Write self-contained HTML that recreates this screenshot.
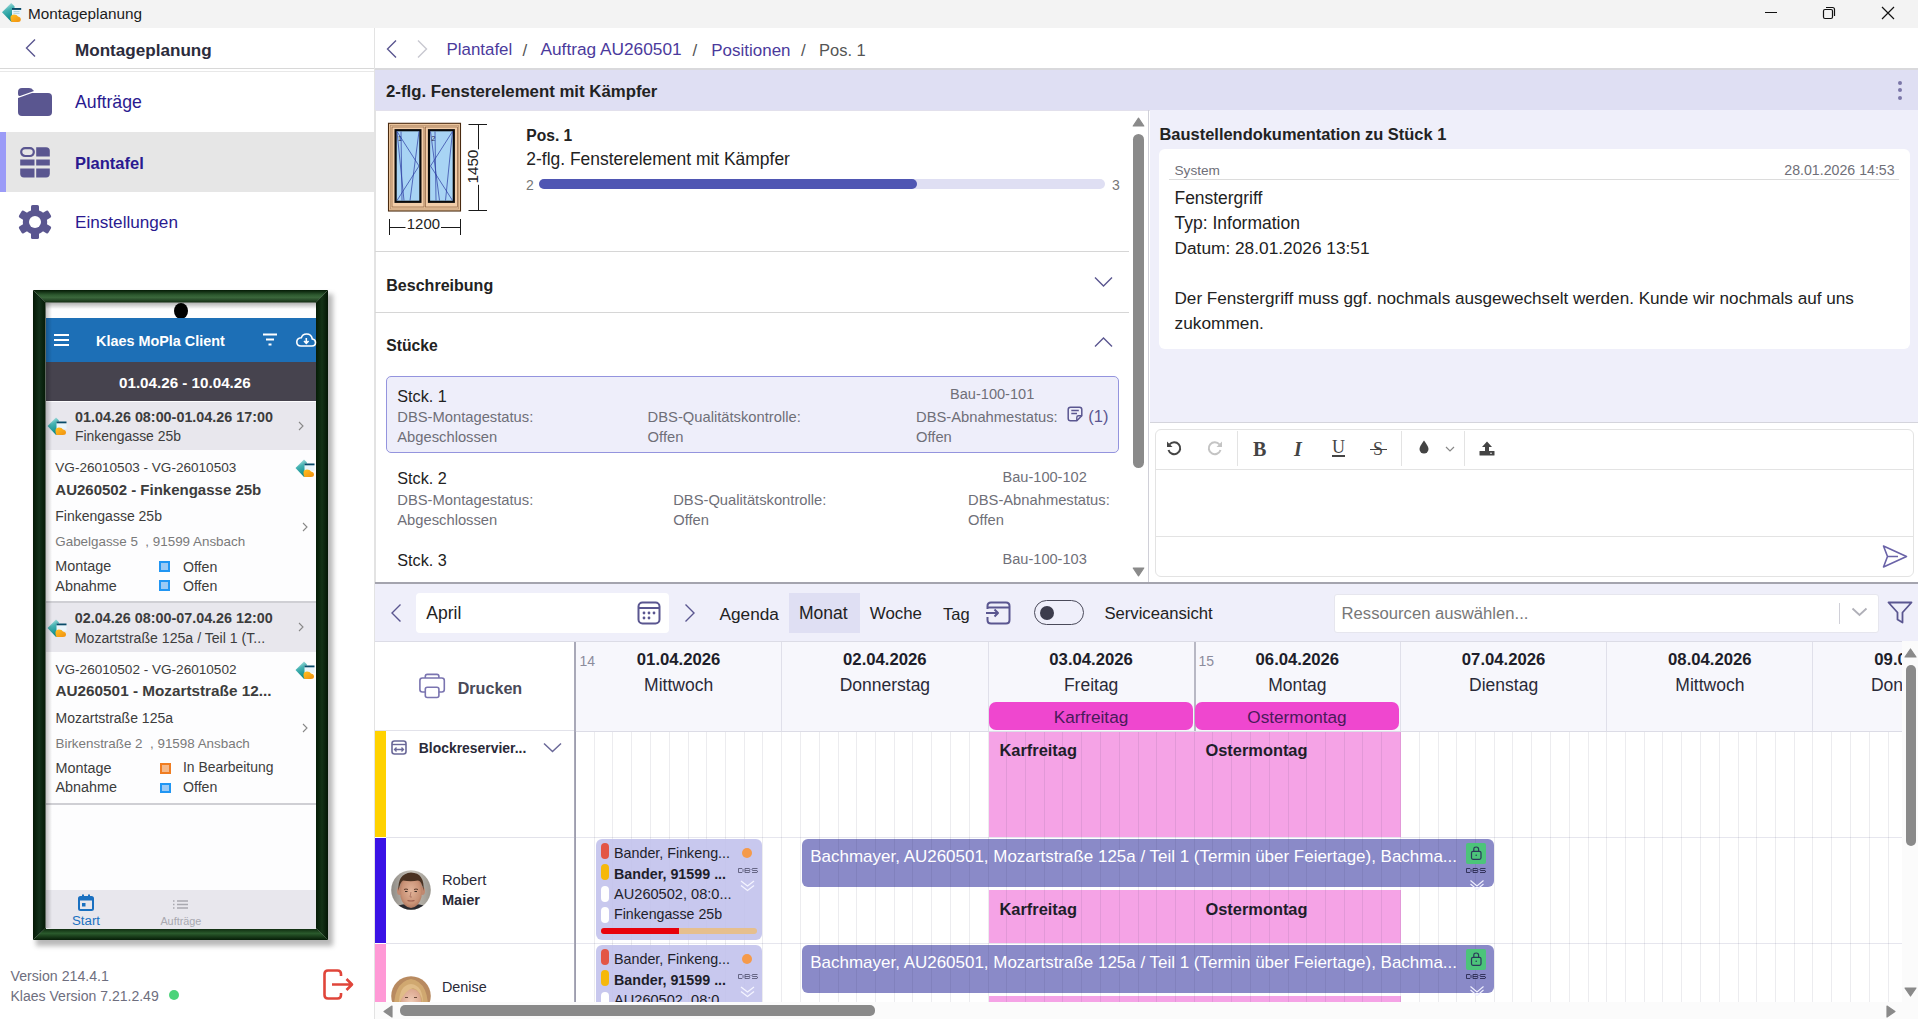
<!DOCTYPE html>
<html><head><meta charset="utf-8"><title>Montageplanung</title>
<style>
html,body{margin:0;padding:0;width:1918px;height:1019px;overflow:hidden;background:#fff;}
body{position:relative;font-family:"Liberation Sans",sans-serif;}
.a{position:absolute;}
.t{position:absolute;white-space:nowrap;font-family:"Liberation Sans",sans-serif;}
svg{overflow:visible}
</style></head><body>
<div class="a" style="left:0px;top:0px;width:1918px;height:28px;background:#f3f3f3;"></div>
<svg class="a" style="left:0px;top:0px;" width="24" height="24" viewBox="0 0 24 24"><defs><linearGradient id="tq" x1="0" y1="0" x2="0.3" y2="1"><stop offset="0" stop-color="#e4f6f6"/><stop offset="0.45" stop-color="#48b4b4"/><stop offset="1" stop-color="#0a8a8a"/></linearGradient>
<linearGradient id="og" x1="0" y1="0" x2="1" y2="1"><stop offset="0" stop-color="#ffc020"/><stop offset="1" stop-color="#f09010"/></linearGradient></defs>
<path d="M2 12.3 L11.2 3 L14.5 6.3 V20 L11.2 21.8Z" fill="url(#tq)"/>
<rect x="12" y="8" width="9.2" height="8.5" fill="#eaf5fb"/><rect x="12" y="8" width="9.2" height="1.9" fill="#0a4a68"/>
<path d="M13.5 11.5 H19.5 M13.5 13.3 H19.5" stroke="#9ac8d8" stroke-width="0.8"/>
<path d="M10.5 17 Q11 14.5 14 14.5 Q17 14.5 18 16.5 Q20.8 17 20.8 19.5 Q20.8 22 18 22 H12 Q10.3 21.5 10.5 17Z" fill="url(#og)"/></svg>
<div class="t " style="left:28px;top:6.05px;font-size:15.3px;line-height:15.3px;font-weight:400;color:#1b1b1b;">Montageplanung</div>
<div class="a" style="left:1765px;top:12px;width:12px;height:1px;background:#111;"></div>
<svg class="a" style="left:1822px;top:6px;" width="14" height="14" viewBox="0 0 14 14"><rect x="1.5" y="3.5" width="9" height="9" rx="1.5" fill="none" stroke="#111" stroke-width="1.2"/><path d="M4 1.5 H10.5 Q12.5 1.5 12.5 3.5 V10" fill="none" stroke="#111" stroke-width="1.2"/></svg>
<svg class="a" style="left:1881px;top:6px;" width="14" height="14" viewBox="0 0 14 14"><path d="M1 1 L13 13 M13 1 L1 13" stroke="#111" stroke-width="1.2"/></svg>
<div class="a" style="left:374px;top:28px;width:1px;height:991px;background:#e3e3e3;"></div>
<svg class="a" style="left:24px;top:38px;" width="14" height="20" viewBox="0 0 14 20"><path d="M11 1.5 L2.5 10 L11 18.5" fill="none" stroke="#5a5690" stroke-width="1.4"/></svg>
<div class="t " style="left:75px;top:41.52px;font-size:17.1px;line-height:17.1px;font-weight:700;color:#2c2c3c;">Montageplanung</div>
<div class="a" style="left:0px;top:68px;width:374px;height:1px;background:#d8d8d8;"></div>
<div class="a" style="left:0px;top:71px;width:374px;height:1px;background:#e8e8e8;"></div>
<svg class="a" style="left:18px;top:88px;" width="34" height="28" viewBox="0 0 34 28"><path d="M0 4 Q0 0 4 0 H11 Q14 0 15 2 L16 3 L2 8 Q0 8.5 0 6Z" fill="#5a5690"/><path d="M0 10 L14 5 H30 Q34 5 34 9 V24 Q34 28 30 28 H4 Q0 28 0 24Z" fill="#5a5690"/></svg>
<div class="t " style="left:75px;top:94.01px;font-size:17.7px;line-height:17.7px;font-weight:400;color:#2a1a90;">Aufträge</div>
<div class="a" style="left:0px;top:132px;width:374px;height:60px;background:#e6e6e6;"></div>
<div class="a" style="left:0px;top:132px;width:6px;height:60px;background:#9b9bf7;"></div>
<svg class="a" style="left:20px;top:146.5px;" width="30" height="31" viewBox="0 0 30 31">
<rect x="1.2" y="1.2" width="12.6" height="7.8" rx="3.9" fill="none" stroke="#5a5690" stroke-width="2.2"/>
<path d="M16.2 0.3 H26 Q29.8 0.3 29.8 4 V9.5 H16.2Z" fill="#5a5690"/>
<rect x="0.2" y="12.5" width="14.3" height="6" fill="#5a5690"/><rect x="16.2" y="12.5" width="13.6" height="6" fill="#5a5690"/>
<path d="M0.2 21.5 H14.5 V30.5 H4 Q0.2 30.5 0.2 26.5Z" fill="#5a5690"/><path d="M16.2 21.5 H29.8 V26.5 Q29.8 30.5 26 30.5 H16.2Z" fill="#5a5690"/>
</svg>
<div class="t " style="left:75px;top:155.03px;font-size:16.5px;line-height:16.5px;font-weight:700;color:#2a1a90;">Plantafel</div>
<svg class="a" style="left:19px;top:205px;" width="32" height="34" viewBox="0 0 32 34"><g transform="translate(16,17)"><circle r="12.2" fill="#5a5690"/><rect x="-4" y="-17" width="8" height="10" rx="1.6" fill="#5a5690" transform="rotate(0)"/><rect x="-4" y="-17" width="8" height="10" rx="1.6" fill="#5a5690" transform="rotate(60)"/><rect x="-4" y="-17" width="8" height="10" rx="1.6" fill="#5a5690" transform="rotate(120)"/><rect x="-4" y="-17" width="8" height="10" rx="1.6" fill="#5a5690" transform="rotate(180)"/><rect x="-4" y="-17" width="8" height="10" rx="1.6" fill="#5a5690" transform="rotate(240)"/><rect x="-4" y="-17" width="8" height="10" rx="1.6" fill="#5a5690" transform="rotate(300)"/><circle r="6" fill="#fff"/></g></svg>
<div class="t " style="left:75px;top:214.48px;font-size:17.15px;line-height:17.15px;font-weight:400;color:#2a1a90;">Einstellungen</div>
<div class="a" style="left:36px;top:294px;width:297px;height:652px;background:rgba(0,0,0,0.28);filter:blur(2.5px);"></div>
<svg class="a" style="left:33px;top:290px;" width="295" height="650" viewBox="0 0 295 650"><defs>
<linearGradient id="gt" x1="0" y1="0" x2="0" y2="1"><stop offset="0" stop-color="#041a05"/><stop offset="0.4" stop-color="#2e5a30"/><stop offset="0.6" stop-color="#3a663b"/><stop offset="1" stop-color="#142e15"/></linearGradient>
<linearGradient id="gl" x1="0" y1="0" x2="1" y2="0"><stop offset="0" stop-color="#041805"/><stop offset="0.5" stop-color="#12301a"/><stop offset="1" stop-color="#051a06"/></linearGradient>
<linearGradient id="gr" x1="0" y1="0" x2="1" y2="0"><stop offset="0" stop-color="#061c07"/><stop offset="0.5" stop-color="#143216"/><stop offset="1" stop-color="#041605"/></linearGradient>
<linearGradient id="gb" x1="0" y1="0" x2="0" y2="1"><stop offset="0" stop-color="#0a240b"/><stop offset="0.45" stop-color="#2a5a2c"/><stop offset="1" stop-color="#061c07"/></linearGradient>
</defs>
<path d="M0 0 H295 L283 12.5 H12.5Z" fill="url(#gt)"/>
<path d="M0 0 L12.5 12.5 V638 L0 650Z" fill="url(#gl)"/>
<path d="M295 0 L283 12.5 V638 L295 650Z" fill="url(#gr)"/>
<path d="M0 650 L12.5 638 H283 L295 650Z" fill="url(#gb)"/></svg>
<div class="a" style="left:45.5px;top:302.5px;width:270.5px;height:625.5px;background:#fdfdfe;"></div>
<div class="a" style="left:173.5px;top:303px;width:14px;height:16px;border-radius:50%;background:#000;"></div>
<div class="a" style="left:46px;top:318px;width:270px;height:44px;background:#1d6fb6;"></div>
<div class="a" style="left:54px;top:334px;width:15px;height:2px;background:#fff;"></div>
<div class="a" style="left:54px;top:339px;width:15px;height:2px;background:#fff;"></div>
<div class="a" style="left:54px;top:344px;width:15px;height:2px;background:#fff;"></div>
<div class="t " style="left:96px;top:333.81px;font-size:14.4px;line-height:14.4px;font-weight:700;color:#fff;">Klaes MoPla Client</div>
<svg class="a" style="left:262px;top:333px;" width="16" height="13" viewBox="0 0 16 13"><path d="M1 1.5 H15 M4 6.5 H12 M6.5 11.5 H9.5" stroke="#fff" stroke-width="1.8"/></svg>
<svg class="a" style="left:296px;top:333px;" width="20" height="14" viewBox="0 0 20 14"><path d="M5 13 H16 Q19.5 13 19.5 9.5 Q19.5 6.3 16.3 6 Q15.5 1 10.5 1 Q6.5 1 5.3 4.8 Q0.8 5.3 0.8 9 Q0.8 13 5 13Z" fill="none" stroke="#fff" stroke-width="1.6"/><path d="M10.3 5 V10 M8 8 L10.3 10.3 L12.6 8" fill="none" stroke="#fff" stroke-width="1.6"/></svg>
<div class="a" style="left:46px;top:362px;width:270px;height:39px;background:#46434e;"></div>
<div class="t " style="left:119px;top:375.13px;font-size:15.2px;line-height:15.2px;font-weight:700;color:#fff;">01.04.26 - 10.04.26</div>
<div class="a" style="left:46px;top:401.5px;width:270px;height:48px;background:#e8e7ed;"></div>
<svg class="a" style="left:47px;top:416px;" width="21" height="20" viewBox="0 0 21 20"><path d="M0.5 10 L9 1.5 L12 4.5 V17 L9 19Z" fill="url(#tq)"/>
<rect x="9.5" y="5.5" width="10" height="7.5" fill="#eaf5fb"/><rect x="9.5" y="5.5" width="10" height="1.8" fill="#0a4a68"/>
<path d="M8.5 14 Q9 11.5 12 11.5 Q15 11.5 16 13.5 Q19 14 19 16.5 Q19 19 16 19 H10 Q8.3 18.5 8.5 14Z" fill="url(#og)"/></svg>
<div class="t " style="left:75px;top:409.54px;font-size:14.36px;line-height:14.36px;font-weight:700;color:#3c3c3c;">01.04.26 08:00-01.04.26 17:00</div>
<div class="t " style="left:75px;top:429.91px;font-size:13.92px;line-height:13.92px;font-weight:400;color:#3c3c3c;">Finkengasse 25b</div>
<svg class="a" style="left:298px;top:421px;" width="6" height="10" viewBox="0 0 6 10"><path d="M1 1 L5 5 L1 9" fill="none" stroke="#888" stroke-width="1.1"/></svg>
<svg class="a" style="left:295px;top:458px;" width="21" height="20" viewBox="0 0 21 20"><path d="M0.5 10 L9 1.5 L12 4.5 V17 L9 19Z" fill="url(#tq)"/>
<rect x="9.5" y="5.5" width="10" height="7.5" fill="#eaf5fb"/><rect x="9.5" y="5.5" width="10" height="1.8" fill="#0a4a68"/>
<path d="M8.5 14 Q9 11.5 12 11.5 Q15 11.5 16 13.5 Q19 14 19 16.5 Q19 19 16 19 H10 Q8.3 18.5 8.5 14Z" fill="url(#og)"/></svg>
<div class="t " style="left:55.3px;top:460.91px;font-size:13.57px;line-height:13.57px;font-weight:400;color:#3c3c3c;">VG-26010503 - VG-26010503</div>
<div class="t " style="left:55.3px;top:482.00px;font-size:15.0px;line-height:15.0px;font-weight:700;color:#3c3c3c;">AU260502 - Finkengasse 25b</div>
<div class="t " style="left:55.3px;top:509.05px;font-size:14.0px;line-height:14.0px;font-weight:400;color:#3c3c3c;">Finkengasse 25b</div>
<div class="t " style="left:55.3px;top:534.65px;font-size:13.4px;line-height:13.4px;font-weight:400;color:#7a7a7a;">Gabelgasse 5&nbsp;&nbsp;, 91599 Ansbach</div>
<svg class="a" style="left:302px;top:522px;" width="6" height="10" viewBox="0 0 6 10"><path d="M1 1 L5 5 L1 9" fill="none" stroke="#888" stroke-width="1.1"/></svg>
<div class="t " style="left:55.3px;top:559.42px;font-size:14.39px;line-height:14.39px;font-weight:400;color:#3c3c3c;">Montage</div>
<div class="t " style="left:55.3px;top:578.82px;font-size:14.39px;line-height:14.39px;font-weight:400;color:#3c3c3c;">Abnahme</div>
<div class="a" style="left:159px;top:561.4px;width:11px;height:10.5px;box-sizing:border-box;border:2.2px solid #2196f3;background:#9ccaf5;"></div>
<div class="a" style="left:159px;top:580.4px;width:11px;height:10.5px;box-sizing:border-box;border:2.2px solid #2196f3;background:#9ccaf5;"></div>
<div class="t " style="left:182.9px;top:559.60px;font-size:14.17px;line-height:14.17px;font-weight:400;color:#3c3c3c;">Offen</div>
<div class="t " style="left:182.9px;top:579.00px;font-size:14.17px;line-height:14.17px;font-weight:400;color:#3c3c3c;">Offen</div>
<div class="a" style="left:46px;top:601px;width:270px;height:1.5px;background:#cfcfd4;"></div>
<div class="a" style="left:46px;top:602.5px;width:270px;height:49px;background:#e8e7ed;"></div>
<svg class="a" style="left:47px;top:618px;" width="21" height="20" viewBox="0 0 21 20"><path d="M0.5 10 L9 1.5 L12 4.5 V17 L9 19Z" fill="url(#tq)"/>
<rect x="9.5" y="5.5" width="10" height="7.5" fill="#eaf5fb"/><rect x="9.5" y="5.5" width="10" height="1.8" fill="#0a4a68"/>
<path d="M8.5 14 Q9 11.5 12 11.5 Q15 11.5 16 13.5 Q19 14 19 16.5 Q19 19 16 19 H10 Q8.3 18.5 8.5 14Z" fill="url(#og)"/></svg>
<div class="t " style="left:74.8px;top:611.24px;font-size:14.36px;line-height:14.36px;font-weight:700;color:#3c3c3c;">02.04.26 08:00-07.04.26 12:00</div>
<div class="t " style="left:74.8px;top:631.24px;font-size:14.12px;line-height:14.12px;font-weight:400;color:#3c3c3c;">Mozartstraße 125a / Teil 1 (T...</div>
<svg class="a" style="left:298px;top:622px;" width="6" height="10" viewBox="0 0 6 10"><path d="M1 1 L5 5 L1 9" fill="none" stroke="#888" stroke-width="1.1"/></svg>
<svg class="a" style="left:295px;top:660px;" width="21" height="20" viewBox="0 0 21 20"><path d="M0.5 10 L9 1.5 L12 4.5 V17 L9 19Z" fill="url(#tq)"/>
<rect x="9.5" y="5.5" width="10" height="7.5" fill="#eaf5fb"/><rect x="9.5" y="5.5" width="10" height="1.8" fill="#0a4a68"/>
<path d="M8.5 14 Q9 11.5 12 11.5 Q15 11.5 16 13.5 Q19 14 19 16.5 Q19 19 16 19 H10 Q8.3 18.5 8.5 14Z" fill="url(#og)"/></svg>
<div class="t " style="left:55.5px;top:662.51px;font-size:13.57px;line-height:13.57px;font-weight:400;color:#3c3c3c;">VG-26010502 - VG-26010502</div>
<div class="t " style="left:55.5px;top:682.85px;font-size:15.3px;line-height:15.3px;font-weight:700;color:#3c3c3c;">AU260501 - Mozartstraße 12...</div>
<div class="t " style="left:55.5px;top:710.65px;font-size:14.0px;line-height:14.0px;font-weight:400;color:#3c3c3c;">Mozartstraße 125a</div>
<div class="t " style="left:55.5px;top:736.65px;font-size:13.4px;line-height:13.4px;font-weight:400;color:#7a7a7a;">Birkenstraße 2&nbsp;&nbsp;, 91598 Ansbach</div>
<svg class="a" style="left:302px;top:723px;" width="6" height="10" viewBox="0 0 6 10"><path d="M1 1 L5 5 L1 9" fill="none" stroke="#888" stroke-width="1.1"/></svg>
<div class="t " style="left:55.5px;top:760.52px;font-size:14.39px;line-height:14.39px;font-weight:400;color:#3c3c3c;">Montage</div>
<div class="t " style="left:55.5px;top:779.82px;font-size:14.39px;line-height:14.39px;font-weight:400;color:#3c3c3c;">Abnahme</div>
<div class="a" style="left:159.5px;top:763.2px;width:11px;height:10.5px;box-sizing:border-box;border:2.2px solid #ef7d22;background:#f5b98a;"></div>
<div class="a" style="left:159.5px;top:782.5px;width:11px;height:10.5px;box-sizing:border-box;border:2.2px solid #2196f3;background:#9ccaf5;"></div>
<div class="t " style="left:183px;top:760.93px;font-size:13.9px;line-height:13.9px;font-weight:400;color:#3c3c3c;">In Bearbeitung</div>
<div class="t " style="left:183px;top:780.00px;font-size:14.17px;line-height:14.17px;font-weight:400;color:#3c3c3c;">Offen</div>
<div class="a" style="left:46px;top:803px;width:270px;height:1.5px;background:#cfcfd4;"></div>
<div class="a" style="left:46px;top:889.5px;width:270px;height:39px;background:#e8e7ed;"></div>
<svg class="a" style="left:78px;top:894px;" width="16" height="17" viewBox="0 0 16 17"><rect x="1" y="3" width="14" height="13" rx="1.5" fill="none" stroke="#1a70c0" stroke-width="2"/><rect x="1" y="3" width="14" height="3.5" fill="#1a70c0"/><rect x="4" y="0.5" width="2" height="4" fill="#1a70c0"/><rect x="10" y="0.5" width="2" height="4" fill="#1a70c0"/><rect x="4" y="9" width="3.5" height="3.5" fill="#1a70c0"/></svg>
<div class="t " style="left:72px;top:913.57px;font-size:13.26px;line-height:13.26px;font-weight:400;color:#1a70c0;">Start</div>
<svg class="a" style="left:173px;top:900px;" width="16" height="10" viewBox="0 0 16 10"><path d="M0 1 H1.5 M0 4.5 H1.5 M0 8 H1.5 M4 1 H15 M4 4.5 H15 M4 8 H15" stroke="#a9a9b0" stroke-width="1.6"/></svg>
<div class="t " style="left:160.4px;top:915.61px;font-size:10.85px;line-height:10.85px;font-weight:400;color:#a9a9b0;">Aufträge</div>
<div class="a" style="left:45.5px;top:302.5px;width:270.5px;height:6px;background:linear-gradient(to bottom, rgba(0,0,0,0.28), rgba(0,0,0,0));"></div>
<div class="a" style="left:45.5px;top:302.5px;width:6px;height:625.5px;background:linear-gradient(to right, rgba(0,0,0,0.22), rgba(0,0,0,0));"></div>
<div class="t " style="left:10.5px;top:968.70px;font-size:14.17px;line-height:14.17px;font-weight:400;color:#6e6e7e;">Version 214.4.1</div>
<div class="t " style="left:10.5px;top:988.61px;font-size:14.04px;line-height:14.04px;font-weight:400;color:#6e6e7e;">Klaes Version 7.21.2.49</div>
<div class="a" style="left:169px;top:990px;width:10px;height:10px;border-radius:50%;background:#4cd37a;"></div>
<svg class="a" style="left:323px;top:969px;" width="32" height="32" viewBox="0 0 32 32"><path d="M18 7 V5 Q18 1.5 14.5 1.5 H5 Q1.5 1.5 1.5 5 V26 Q1.5 29.5 5 29.5 H14.5 Q18 29.5 18 26 V24" fill="none" stroke="#e0453a" stroke-width="2.6"/><path d="M9 15.5 H29 M23.5 10 L29 15.5 L23.5 21" fill="none" stroke="#e0453a" stroke-width="2.6" stroke-linejoin="round"/></svg>
<svg class="a" style="left:385px;top:39px;" width="13" height="20" viewBox="0 0 13 20"><path d="M11 1.5 L2.5 10 L11 18.5" fill="none" stroke="#5a5690" stroke-width="1.4"/></svg>
<svg class="a" style="left:416px;top:39px;" width="13" height="20" viewBox="0 0 13 20"><path d="M2 1.5 L10.5 10 L2 18.5" fill="none" stroke="#c8c8d0" stroke-width="1.4"/></svg>
<div class="t " style="left:446.5px;top:41.69px;font-size:16.9px;line-height:16.9px;font-weight:400;color:#4b3a9c;">Plantafel</div>
<div class="t " style="left:522.5px;top:41.61px;font-size:17px;line-height:17px;font-weight:400;color:#555;">/</div>
<div class="t " style="left:540.5px;top:41.37px;font-size:17.28px;line-height:17.28px;font-weight:400;color:#4b3a9c;">Auftrag AU260501</div>
<div class="t " style="left:692.5px;top:41.61px;font-size:17px;line-height:17px;font-weight:400;color:#555;">/</div>
<div class="t " style="left:711.3px;top:41.62px;font-size:16.98px;line-height:16.98px;font-weight:400;color:#4b3a9c;">Positionen</div>
<div class="t " style="left:801px;top:41.61px;font-size:17px;line-height:17px;font-weight:400;color:#555;">/</div>
<div class="t " style="left:819px;top:42.03px;font-size:16.5px;line-height:16.5px;font-weight:400;color:#555;">Pos. 1</div>
<div class="a" style="left:375px;top:68px;width:1543px;height:2px;background:#d9d9dc;"></div>
<div class="a" style="left:375px;top:70px;width:1543px;height:40px;background:#dfdff3;"></div>
<div class="a" style="left:375px;top:110px;width:1543px;height:1px;background:#e2e0ec;"></div>
<div class="t " style="left:386px;top:83.78px;font-size:16.8px;line-height:16.8px;font-weight:700;color:#222;">2-flg. Fensterelement mit Kämpfer</div>
<div class="a" style="left:1898px;top:81px;width:4px;height:4px;border-radius:50%;background:#7b76a8"></div>
<div class="a" style="left:1898px;top:88px;width:4px;height:4px;border-radius:50%;background:#7b76a8"></div>
<div class="a" style="left:1898px;top:95.5px;width:4px;height:4px;border-radius:50%;background:#7b76a8"></div>
<div class="a" style="left:375px;top:110px;width:1px;height:472px;background:#e3e3e3;"></div>
<svg class="a" style="left:388px;top:122px;" width="100" height="115" viewBox="0 0 100 115">
<rect x="0.5" y="1.3" width="72" height="87.7" fill="#f0c9a0" stroke="#4a2a10" stroke-width="1.1"/>
<rect x="2.5" y="3.3" width="68" height="83.7" fill="none" stroke="#b08a6a" stroke-width="0.7"/>
<rect x="4" y="5" width="32" height="80" fill="#f2cda8" stroke="#8a6040" stroke-width="0.7"/>
<rect x="37.5" y="5" width="32" height="80" fill="#f2cda8" stroke="#8a6040" stroke-width="0.7"/>
<rect x="7.6" y="8.2" width="24.8" height="71.6" fill="#a8d4f4" stroke="#0a0a0a" stroke-width="2.2"/>
<rect x="41" y="8.2" width="24.8" height="71.6" fill="#a8d4f4" stroke="#0a0a0a" stroke-width="2.2"/>
<path d="M9 78.5 L31 44 L9 9.5 M31 9.5 L22 78.5 M9 9.5 L16 78.5 M13 9.5 L14 78.5" fill="none" stroke="#2a3aa0" stroke-width="0.7"/>
<path d="M64.5 78.5 L42.5 44 L64.5 9.5 M42.5 9.5 L51.5 78.5 M64.5 9.5 L57.5 78.5 M47 9.5 L48 78.5" fill="none" stroke="#2a3aa0" stroke-width="0.7"/>
<text x="10" y="19" font-size="7" fill="#2a2a50" font-family="Liberation Sans">1</text>
<text x="43.5" y="19" font-size="7" fill="#2a2a50" font-family="Liberation Sans">2</text>
<path d="M80.5 2.5 H99 M90.5 2.5 V27.3 M90.5 62.8 V88.5 M80.5 88.5 H99" fill="none" stroke="#1a1a1a" stroke-width="1"/>
<path d="M1.5 97 V113 M72.5 97 V113 M1.5 105.5 H17.5 M53 105.5 H72.5" fill="none" stroke="#1a1a1a" stroke-width="1"/>
<text transform="translate(90.3,61.6) rotate(-90)" font-size="15.28" fill="#222" font-family="Liberation Sans">1450</text>
</svg>
<div class="t " style="left:406.8px;top:217.17px;font-size:14.92px;line-height:14.92px;font-weight:400;color:#222;">1200</div>
<div class="t " style="left:526.3px;top:127.99px;font-size:15.6px;line-height:15.6px;font-weight:700;color:#222;">Pos. 1</div>
<div class="t " style="left:526.3px;top:151.22px;font-size:17.46px;line-height:17.46px;font-weight:400;color:#222;">2-flg. Fensterelement mit Kämpfer</div>
<div class="t " style="left:526px;top:178.15px;font-size:14px;line-height:14px;font-weight:400;color:#777;">2</div>
<div class="a" style="left:539px;top:179px;width:566px;height:10px;border-radius:5px;background:#dfdff3"></div>
<div class="a" style="left:539px;top:179px;width:378px;height:10px;border-radius:5px;background:#4f56b3"></div>
<div class="t " style="left:1112px;top:178.15px;font-size:14px;line-height:14px;font-weight:400;color:#777;">3</div>
<div class="a" style="left:375px;top:251px;width:754px;height:1px;background:#d6d6d6;"></div>
<div class="t " style="left:386.3px;top:276.61px;font-size:16.05px;line-height:16.05px;font-weight:700;color:#222;">Beschreibung</div>
<svg class="a" style="left:1094px;top:276px;" width="19" height="12" viewBox="0 0 19 12"><path d="M1 1.5 L9.5 10 L18 1.5" fill="none" stroke="#5a5690" stroke-width="1.4"/></svg>
<div class="a" style="left:375px;top:312px;width:754px;height:1px;background:#d6d6d6;"></div>
<div class="t " style="left:386.3px;top:337.71px;font-size:15.7px;line-height:15.7px;font-weight:700;color:#222;">Stücke</div>
<svg class="a" style="left:1094px;top:336px;" width="19" height="12" viewBox="0 0 19 12"><path d="M1 10.5 L9.5 2 L18 10.5" fill="none" stroke="#5a5690" stroke-width="1.4"/></svg>
<div class="a" style="left:386px;top:376px;width:733px;height:76.5px;box-sizing:border-box;border:1px solid #9494de;border-radius:5px;background:#eeeefa"></div>
<div class="t " style="left:397.3px;top:388.28px;font-size:16.2px;line-height:16.2px;font-weight:400;color:#222;">Stck. 1</div>
<div class="t " style="left:950px;top:386.86px;font-size:14.58px;line-height:14.58px;font-weight:400;color:#6f6f78;">Bau-100-101</div>
<div class="t " style="left:397.3px;top:410.32px;font-size:14.74px;line-height:14.74px;font-weight:400;color:#6f6f78;">DBS-Montagestatus:</div>
<div class="t " style="left:397.3px;top:430.32px;font-size:14.74px;line-height:14.74px;font-weight:400;color:#6f6f78;">Abgeschlossen</div>
<div class="t " style="left:647.6px;top:410.32px;font-size:14.74px;line-height:14.74px;font-weight:400;color:#6f6f78;">DBS-Qualitätskontrolle:</div>
<div class="t " style="left:647.6px;top:430.32px;font-size:14.74px;line-height:14.74px;font-weight:400;color:#6f6f78;">Offen</div>
<div class="t " style="left:916px;top:410.32px;font-size:14.74px;line-height:14.74px;font-weight:400;color:#6f6f78;">DBS-Abnahmestatus:</div>
<div class="t " style="left:916px;top:430.32px;font-size:14.74px;line-height:14.74px;font-weight:400;color:#6f6f78;">Offen</div>
<svg class="a" style="left:1067px;top:406px;" width="16" height="16" viewBox="0 0 16 16"><path d="M9.8 14.8 H3.5 Q1.2 14.8 1.2 12.5 V3.5 Q1.2 1.2 3.5 1.2 H12.5 Q14.8 1.2 14.8 3.5 V9.8Z" fill="none" stroke="#5a5690" stroke-width="1.5" stroke-linejoin="round"/><path d="M9.8 14.8 V11.5 Q9.8 9.8 11.5 9.8 H14.8" fill="none" stroke="#5a5690" stroke-width="1.4"/><path d="M4.3 4.5 H11.8 M4.3 7.5 H10" stroke="#5a5690" stroke-width="1.4"/></svg>
<div class="t " style="left:1088.3px;top:407.83px;font-size:16.5px;line-height:16.5px;font-weight:400;color:#5a5690;">(1)</div>
<div class="t " style="left:397.3px;top:469.68px;font-size:16.2px;line-height:16.2px;font-weight:400;color:#222;">Stck. 2</div>
<div class="t " style="left:1002.5px;top:469.96px;font-size:14.58px;line-height:14.58px;font-weight:400;color:#6f6f78;">Bau-100-102</div>
<div class="t " style="left:397.3px;top:492.92px;font-size:14.74px;line-height:14.74px;font-weight:400;color:#6f6f78;">DBS-Montagestatus:</div>
<div class="t " style="left:397.3px;top:513.12px;font-size:14.74px;line-height:14.74px;font-weight:400;color:#6f6f78;">Abgeschlossen</div>
<div class="t " style="left:673.2px;top:492.92px;font-size:14.74px;line-height:14.74px;font-weight:400;color:#6f6f78;">DBS-Qualitätskontrolle:</div>
<div class="t " style="left:673.2px;top:513.12px;font-size:14.74px;line-height:14.74px;font-weight:400;color:#6f6f78;">Offen</div>
<div class="t " style="left:968.1px;top:492.92px;font-size:14.74px;line-height:14.74px;font-weight:400;color:#6f6f78;">DBS-Abnahmestatus:</div>
<div class="t " style="left:968.1px;top:513.12px;font-size:14.74px;line-height:14.74px;font-weight:400;color:#6f6f78;">Offen</div>
<div class="t " style="left:397.3px;top:552.28px;font-size:16.2px;line-height:16.2px;font-weight:400;color:#222;">Stck. 3</div>
<div class="t " style="left:1002.5px;top:551.96px;font-size:14.58px;line-height:14.58px;font-weight:400;color:#6f6f78;">Bau-100-103</div>
<svg class="a" style="left:1132px;top:117px;" width="13" height="10" viewBox="0 0 13 10"><path d="M1.2 9 L6.5 1.2 L11.8 9Z" fill="#8a8a8a" stroke="#8a8a8a" stroke-width="1.2" stroke-linejoin="round"/></svg>
<div class="a" style="left:1133px;top:134px;width:11px;height:334px;border-radius:5.5px;background:#8a8a8a"></div>
<svg class="a" style="left:1132px;top:567px;" width="13" height="10" viewBox="0 0 13 10"><path d="M1.2 1 L6.5 8.8 L11.8 1Z" fill="#8a8a8a" stroke="#8a8a8a" stroke-width="1.2" stroke-linejoin="round"/></svg>
<div class="a" style="left:1148px;top:110px;width:1px;height:472px;background:#d0d0d8;"></div>
<div class="a" style="left:1149.5px;top:110px;width:768.5px;height:312px;background:#efeffa;"></div>
<div class="t " style="left:1159.5px;top:126.07px;font-size:16.45px;line-height:16.45px;font-weight:700;color:#222;">Baustellendokumentation zu Stück 1</div>
<div class="a" style="left:1159px;top:149px;width:751px;height:200px;border-radius:6px;background:#fff"></div>
<div class="t " style="left:1174.5px;top:163.94px;font-size:13.65px;line-height:13.65px;font-weight:400;color:#6f6f78;">System</div>
<div class="t " style="right:23.40000000000009px;top:163.49px;font-size:14.18px;line-height:14.18px;font-weight:400;color:#6f6f78;">28.01.2026 14:53</div>
<div class="a" style="left:1169px;top:179px;width:730px;height:1px;background:#dcdcdc;"></div>
<div class="t " style="left:1174.5px;top:190.22px;font-size:17.46px;line-height:17.46px;font-weight:400;color:#222;">Fenstergriff</div>
<div class="t " style="left:1174.5px;top:215.18px;font-size:17.5px;line-height:17.5px;font-weight:400;color:#222;">Typ: Information</div>
<div class="t " style="left:1174.5px;top:240.35px;font-size:17.3px;line-height:17.3px;font-weight:400;color:#222;">Datum: 28.01.2026 13:51</div>
<div class="t " style="left:1174.5px;top:290.49px;font-size:17.14px;line-height:17.14px;font-weight:400;color:#222;">Der Fenstergriff muss ggf. nochmals ausgewechselt werden. Kunde wir nochmals auf uns</div>
<div class="t " style="left:1174.5px;top:314.85px;font-size:17.3px;line-height:17.3px;font-weight:400;color:#222;">zukommen.</div>
<div class="a" style="left:1149.5px;top:422px;width:768.5px;height:1px;background:#d4d4dc;"></div>
<div class="a" style="left:1149.5px;top:423px;width:768.5px;height:159px;background:#fff;"></div>
<div class="a" style="left:1154.5px;top:428.5px;width:759.5px;height:148.5px;box-sizing:border-box;border:1px solid #e3e3e3;border-radius:6px;"></div>
<div class="a" style="left:1155px;top:469px;width:759px;height:1px;background:#e3e3e3;"></div>
<div class="a" style="left:1155px;top:535.5px;width:759px;height:1px;background:#e3e3e3;"></div>
<div class="a" style="left:1236.5px;top:431px;width:1px;height:35px;background:#e3e3e3;"></div>
<div class="a" style="left:1400.5px;top:431px;width:1px;height:35px;background:#e3e3e3;"></div>
<div class="a" style="left:1463.5px;top:431px;width:1px;height:35px;background:#e3e3e3;"></div>
<svg class="a" style="left:1166px;top:440px;" width="16" height="16" viewBox="0 0 16 16"><path d="M3.5 4.5 A6 6 0 1 1 2.5 10" fill="none" stroke="#444" stroke-width="2"/><path d="M1 1.5 V7 H6.5Z" fill="#444"/></svg>
<svg class="a" style="left:1207px;top:440px;" width="16" height="16" viewBox="0 0 16 16"><path d="M12.5 4.5 A6 6 0 1 0 13.5 10" fill="none" stroke="#c4c4c4" stroke-width="2"/><path d="M15 1.5 V7 H9.5Z" fill="#c4c4c4"/></svg>
<div class="t " style="left:1253px;top:438.57px;font-size:20px;line-height:20px;font-weight:700;color:#444;font-family:Liberation Serif,serif;">B</div>
<div class="t " style="left:1294px;top:438.57px;font-size:20px;line-height:20px;font-weight:700;color:#444;font-family:Liberation Serif,serif;font-style:italic;">I</div>
<div class="t " style="left:1332px;top:438.26px;font-size:18px;line-height:18px;font-weight:400;color:#444;font-family:Liberation Serif,serif;">U</div>
<div class="a" style="left:1332px;top:455px;width:13px;height:1.6px;background:#444;"></div>
<div class="t " style="left:1373px;top:440.26px;font-size:18px;line-height:18px;font-weight:400;color:#444;font-family:Liberation Serif,serif;">S</div>
<div class="a" style="left:1369.5px;top:448.5px;width:17px;height:1.3px;background:#444;"></div>
<svg class="a" style="left:1418.5px;top:440px;" width="10" height="14" viewBox="0 0 10 14"><path d="M5 0.5 Q9.5 6.5 9.5 9 A4.5 4.5 0 0 1 0.5 9 Q0.5 6.5 5 0.5Z" fill="#444"/></svg>
<svg class="a" style="left:1444.5px;top:446px;" width="10" height="6" viewBox="0 0 10 6"><path d="M1 1 L5 5 L9 1" fill="none" stroke="#888" stroke-width="1.2"/></svg>
<svg class="a" style="left:1478.5px;top:441px;" width="16" height="15" viewBox="0 0 16 15"><path d="M8 0.5 L13 6 H10 V11 H6 V6 H3Z" fill="#444"/><rect x="0.5" y="10" width="15" height="4.5" rx="0.5" fill="#444"/><circle cx="12" cy="12.3" r="0.8" fill="#fff"/></svg>
<svg class="a" style="left:1881.5px;top:544px;" width="26" height="26" viewBox="0 0 26 26"><path d="M1.5 2 L24.5 12.5 L1.5 23 L5.5 12.5Z M5.5 12.5 H16" fill="none" stroke="#6a63a8" stroke-width="1.6" stroke-linejoin="round"/></svg>
<div class="a" style="left:375px;top:582px;width:1543px;height:2px;background:#a4a4ae;"></div>
<div class="a" style="left:375px;top:584px;width:1543px;height:57px;background:#efeffa;"></div>
<svg class="a" style="left:390px;top:603px;" width="12" height="20" viewBox="0 0 12 20"><path d="M10.5 1.5 L2 10 L10.5 18.5" fill="none" stroke="#5a5690" stroke-width="1.4"/></svg>
<div class="a" style="left:416px;top:593px;width:253px;height:39.5px;border-radius:4px;background:#fff"></div>
<div class="t " style="left:426.3px;top:604.88px;font-size:17.5px;line-height:17.5px;font-weight:400;color:#222;">April</div>
<svg class="a" style="left:637px;top:601px;" width="24" height="24" viewBox="0 0 24 24"><rect x="1.5" y="1.5" width="21" height="21" rx="4" fill="none" stroke="#5a5690" stroke-width="2"/><path d="M1.5 7 H22.5" stroke="#5a5690" stroke-width="2"/><circle cx="7" cy="12" r="1.4" fill="#5a5690"/><circle cx="12" cy="12" r="1.4" fill="#5a5690"/><circle cx="17" cy="12" r="1.4" fill="#5a5690"/><circle cx="7" cy="17" r="1.4" fill="#5a5690"/><circle cx="12" cy="17" r="1.4" fill="#5a5690"/></svg>
<svg class="a" style="left:684px;top:603px;" width="12" height="20" viewBox="0 0 12 20"><path d="M1.5 1.5 L10 10 L1.5 18.5" fill="none" stroke="#5a5690" stroke-width="1.4"/></svg>
<div class="t " style="left:719.5px;top:605.71px;font-size:17.23px;line-height:17.23px;font-weight:400;color:#222;">Agenda</div>
<div class="a" style="left:789px;top:593px;width:71px;height:40px;background:#dfdff3;"></div>
<div class="t " style="left:799px;top:605.48px;font-size:17.5px;line-height:17.5px;font-weight:400;color:#222;">Monat</div>
<div class="t " style="left:869.8px;top:606.02px;font-size:16.87px;line-height:16.87px;font-weight:400;color:#222;">Woche</div>
<div class="t " style="left:943px;top:606.33px;font-size:16.5px;line-height:16.5px;font-weight:400;color:#222;">Tag</div>
<svg class="a" style="left:986px;top:601px;" width="25" height="24" viewBox="0 0 25 24"><path d="M1.5 8 V5 Q1.5 1.5 5 1.5 H20 Q23.5 1.5 23.5 5 V19 Q23.5 22.5 20 22.5 H5 Q1.5 22.5 1.5 19 V16" fill="none" stroke="#5a5690" stroke-width="2"/><path d="M1.5 6.5 H23.5" stroke="#5a5690" stroke-width="2"/><path d="M0 12 H12 M8.5 8.5 L12 12 L8.5 15.5" fill="none" stroke="#5a5690" stroke-width="2" stroke-linejoin="round"/></svg>
<div class="a" style="left:1034px;top:600px;width:50px;height:25px;box-sizing:border-box;border:1.5px solid #4a4a5a;border-radius:12.5px;"></div>
<div class="a" style="left:1039.5px;top:605.5px;width:14px;height:14px;border-radius:50%;background:#3c3c4c"></div>
<div class="t " style="left:1104.4px;top:606.19px;font-size:16.67px;line-height:16.67px;font-weight:400;color:#222;">Serviceansicht</div>
<div class="a" style="left:1334px;top:593.5px;width:545px;height:39.5px;box-sizing:border-box;border:1px solid #e6e6ee;border-radius:3px;background:#fff"></div>
<div class="t " style="left:1341.6px;top:606.20px;font-size:16.65px;line-height:16.65px;font-weight:400;color:#777;">Ressourcen auswählen...</div>
<div class="a" style="left:1838.5px;top:603px;width:1px;height:21px;background:#d0d0d8;"></div>
<svg class="a" style="left:1851px;top:607px;" width="17" height="10" viewBox="0 0 17 10"><path d="M1.5 1.5 L8.5 8 L15.5 1.5" fill="none" stroke="#b0b0b8" stroke-width="1.8"/></svg>
<svg class="a" style="left:1887px;top:601px;" width="26" height="23" viewBox="0 0 26 23"><path d="M1.5 1.5 H24.5 L15.5 11.5 V21.5 L10.5 18.5 V11.5Z" fill="none" stroke="#5a5690" stroke-width="1.8" stroke-linejoin="round"/></svg>
<div class="a" style="left:375px;top:641px;width:1543px;height:1px;background:#dcdce6;"></div>
<div class="a" style="left:375px;top:642px;width:199.5px;height:360px;background:#fff;"></div>
<svg class="a" style="left:419px;top:673px;" width="26" height="26" viewBox="0 0 26 26"><path d="M6.3 5 V3.5 Q6.3 1.4 8.3 1.4 H17.9 Q19.9 1.4 19.9 3.5 V5" fill="none" stroke="#7a74b0" stroke-width="1.6"/><path d="M6.3 19 H3.4 Q0.9 19 0.9 16.5 V7.5 Q0.9 5 3.4 5 H22.8 Q25.3 5 25.3 7.5 V16.5 Q25.3 19 22.8 19 H19.9" fill="none" stroke="#7a74b0" stroke-width="1.6"/><rect x="6.3" y="14.2" width="13.6" height="10.3" rx="2" fill="#fff" stroke="#7a74b0" stroke-width="1.6"/></svg>
<div class="t " style="left:457.7px;top:680.33px;font-size:16.14px;line-height:16.14px;font-weight:700;color:#4a4a58;">Drucken</div>
<div class="a" style="left:576px;top:642px;width:1326px;height:89px;background:#f7f7fc;"></div>
<div class="a" style="left:781px;top:642px;width:1px;height:89px;background:#e0e0ea;"></div>
<div class="a" style="left:988px;top:642px;width:1px;height:89px;background:#e0e0ea;"></div>
<div class="a" style="left:1194px;top:642px;width:1.5px;height:89px;background:#b8b8c4;"></div>
<div class="a" style="left:1400px;top:642px;width:1px;height:89px;background:#e0e0ea;"></div>
<div class="a" style="left:1606px;top:642px;width:1px;height:89px;background:#e0e0ea;"></div>
<div class="a" style="left:1812px;top:642px;width:1px;height:89px;background:#e0e0ea;"></div>
<div class="a" style="left:574px;top:642px;width:1.8px;height:360px;background:#a9a9b8;"></div>
<div class="t " style="left:579.5px;top:654.15px;font-size:14px;line-height:14px;font-weight:400;color:#8c8c9c;">14</div>
<div class="t " style="left:1198.5px;top:654.15px;font-size:14px;line-height:14px;font-weight:400;color:#8c8c9c;">15</div>
<div class="t " style="left:378.625px;width:600px;text-align:center;top:652.34px;font-size:16.72px;line-height:16.72px;font-weight:700;color:#1e1e2a;">01.04.2026</div>
<div class="t " style="left:378.625px;width:600px;text-align:center;top:676.98px;font-size:17.5px;line-height:17.5px;font-weight:400;color:#2a2a38;">Mittwoch</div>
<div class="t " style="left:584.875px;width:600px;text-align:center;top:652.34px;font-size:16.72px;line-height:16.72px;font-weight:700;color:#1e1e2a;">02.04.2026</div>
<div class="t " style="left:584.875px;width:600px;text-align:center;top:676.98px;font-size:17.5px;line-height:17.5px;font-weight:400;color:#2a2a38;">Donnerstag</div>
<div class="t " style="left:791.125px;width:600px;text-align:center;top:652.34px;font-size:16.72px;line-height:16.72px;font-weight:700;color:#1e1e2a;">03.04.2026</div>
<div class="t " style="left:791.125px;width:600px;text-align:center;top:676.98px;font-size:17.5px;line-height:17.5px;font-weight:400;color:#2a2a38;">Freitag</div>
<div class="t " style="left:997.375px;width:600px;text-align:center;top:652.34px;font-size:16.72px;line-height:16.72px;font-weight:700;color:#1e1e2a;">06.04.2026</div>
<div class="t " style="left:997.375px;width:600px;text-align:center;top:676.98px;font-size:17.5px;line-height:17.5px;font-weight:400;color:#2a2a38;">Montag</div>
<div class="t " style="left:1203.625px;width:600px;text-align:center;top:652.34px;font-size:16.72px;line-height:16.72px;font-weight:700;color:#1e1e2a;">07.04.2026</div>
<div class="t " style="left:1203.625px;width:600px;text-align:center;top:676.98px;font-size:17.5px;line-height:17.5px;font-weight:400;color:#2a2a38;">Dienstag</div>
<div class="t " style="left:1409.875px;width:600px;text-align:center;top:652.34px;font-size:16.72px;line-height:16.72px;font-weight:700;color:#1e1e2a;">08.04.2026</div>
<div class="t " style="left:1409.875px;width:600px;text-align:center;top:676.98px;font-size:17.5px;line-height:17.5px;font-weight:400;color:#2a2a38;">Mittwoch</div>
<div class="t " style="left:1616.125px;width:600px;text-align:center;top:652.34px;font-size:16.72px;line-height:16.72px;font-weight:700;color:#1e1e2a;">09.04.2026</div>
<div class="t " style="left:1616.125px;width:600px;text-align:center;top:676.98px;font-size:17.5px;line-height:17.5px;font-weight:400;color:#2a2a38;">Donnerstag</div>
<div class="a" style="left:989px;top:702px;width:204px;height:28px;border-radius:7px;background:#ef47cf"></div>
<div class="a" style="left:1195px;top:702px;width:204px;height:28px;border-radius:7px;background:#ef47cf"></div>
<div class="t " style="left:791px;width:600px;text-align:center;top:708.74px;font-size:17.2px;line-height:17.2px;font-weight:400;color:#4a1a5a;">Karfreitag</div>
<div class="t " style="left:997px;width:600px;text-align:center;top:708.74px;font-size:17.2px;line-height:17.2px;font-weight:400;color:#4a1a5a;">Ostermontag</div>
<div class="a" style="left:576px;top:730.5px;width:1326px;height:1px;background:#dcdce6;"></div>
<div class="a" style="left:375px;top:730px;width:199px;height:1px;background:#e2e2ea;"></div>
<div class="a" style="left:576px;top:731.5px;width:1326px;height:270.5px;background:#fff;"></div>
<div class="a" style="left:375px;top:731px;width:11px;height:106px;background:#ffd200;"></div>
<div class="a" style="left:375px;top:838px;width:11px;height:105px;background:#3a12e6;"></div>
<div class="a" style="left:375px;top:944px;width:11px;height:58px;background:#ff99d6;"></div>
<div class="a" style="left:386px;top:836.5px;width:188px;height:1px;background:#e2e2ea;"></div>
<div class="a" style="left:576px;top:836.5px;width:1326px;height:1px;background:#e6e6ee;"></div>
<div class="a" style="left:386px;top:943px;width:188px;height:1px;background:#e2e2ea;"></div>
<div class="a" style="left:576px;top:943px;width:1326px;height:1px;background:#e6e6ee;"></div>
<div class="a" style="left:989px;top:731.5px;width:412px;height:105px;background:#f5a3e6;"></div>
<div class="a" style="left:989px;top:890px;width:412px;height:52.5px;background:#f5a3e6;"></div>
<div class="a" style="left:989px;top:996px;width:412px;height:6px;background:#f5a3e6;"></div>
<div class="a" style="left:802px;top:839px;width:692px;height:48px;border-radius:6px;background:#8a8ac8"></div>
<div class="a" style="left:802px;top:945px;width:692px;height:47.5px;border-radius:6px;background:#8a8ac8"></div>
<div class="a" style="left:575px;top:731.5px;width:1px;height:270.5px;background:rgba(40,40,80,0.09);"></div>
<div class="a" style="left:594px;top:731.5px;width:1px;height:270.5px;background:rgba(40,40,80,0.09);"></div>
<div class="a" style="left:612px;top:731.5px;width:1px;height:270.5px;background:rgba(40,40,80,0.09);"></div>
<div class="a" style="left:631px;top:731.5px;width:1px;height:270.5px;background:rgba(40,40,80,0.09);"></div>
<div class="a" style="left:650px;top:731.5px;width:1px;height:270.5px;background:rgba(40,40,80,0.09);"></div>
<div class="a" style="left:669px;top:731.5px;width:1px;height:270.5px;background:rgba(40,40,80,0.09);"></div>
<div class="a" style="left:688px;top:731.5px;width:1px;height:270.5px;background:rgba(40,40,80,0.09);"></div>
<div class="a" style="left:706px;top:731.5px;width:1px;height:270.5px;background:rgba(40,40,80,0.09);"></div>
<div class="a" style="left:725px;top:731.5px;width:1px;height:270.5px;background:rgba(40,40,80,0.09);"></div>
<div class="a" style="left:744px;top:731.5px;width:1px;height:270.5px;background:rgba(40,40,80,0.09);"></div>
<div class="a" style="left:762px;top:731.5px;width:1px;height:270.5px;background:rgba(40,40,80,0.09);"></div>
<div class="a" style="left:781px;top:731.5px;width:1px;height:270.5px;background:rgba(40,40,80,0.09);"></div>
<div class="a" style="left:800px;top:731.5px;width:1px;height:270.5px;background:rgba(40,40,80,0.09);"></div>
<div class="a" style="left:819px;top:731.5px;width:1px;height:270.5px;background:rgba(40,40,80,0.09);"></div>
<div class="a" style="left:838px;top:731.5px;width:1px;height:270.5px;background:rgba(40,40,80,0.09);"></div>
<div class="a" style="left:856px;top:731.5px;width:1px;height:270.5px;background:rgba(40,40,80,0.09);"></div>
<div class="a" style="left:875px;top:731.5px;width:1px;height:270.5px;background:rgba(40,40,80,0.09);"></div>
<div class="a" style="left:894px;top:731.5px;width:1px;height:270.5px;background:rgba(40,40,80,0.09);"></div>
<div class="a" style="left:912px;top:731.5px;width:1px;height:270.5px;background:rgba(40,40,80,0.09);"></div>
<div class="a" style="left:931px;top:731.5px;width:1px;height:270.5px;background:rgba(40,40,80,0.09);"></div>
<div class="a" style="left:950px;top:731.5px;width:1px;height:270.5px;background:rgba(40,40,80,0.09);"></div>
<div class="a" style="left:969px;top:731.5px;width:1px;height:270.5px;background:rgba(40,40,80,0.09);"></div>
<div class="a" style="left:988px;top:731.5px;width:1px;height:270.5px;background:rgba(40,40,80,0.09);"></div>
<div class="a" style="left:1006px;top:731.5px;width:1px;height:270.5px;background:rgba(40,40,80,0.09);"></div>
<div class="a" style="left:1025px;top:731.5px;width:1px;height:270.5px;background:rgba(40,40,80,0.09);"></div>
<div class="a" style="left:1044px;top:731.5px;width:1px;height:270.5px;background:rgba(40,40,80,0.09);"></div>
<div class="a" style="left:1062px;top:731.5px;width:1px;height:270.5px;background:rgba(40,40,80,0.09);"></div>
<div class="a" style="left:1081px;top:731.5px;width:1px;height:270.5px;background:rgba(40,40,80,0.09);"></div>
<div class="a" style="left:1100px;top:731.5px;width:1px;height:270.5px;background:rgba(40,40,80,0.09);"></div>
<div class="a" style="left:1119px;top:731.5px;width:1px;height:270.5px;background:rgba(40,40,80,0.09);"></div>
<div class="a" style="left:1138px;top:731.5px;width:1px;height:270.5px;background:rgba(40,40,80,0.09);"></div>
<div class="a" style="left:1156px;top:731.5px;width:1px;height:270.5px;background:rgba(40,40,80,0.09);"></div>
<div class="a" style="left:1175px;top:731.5px;width:1px;height:270.5px;background:rgba(40,40,80,0.09);"></div>
<div class="a" style="left:1194px;top:731.5px;width:1px;height:270.5px;background:rgba(40,40,80,0.09);"></div>
<div class="a" style="left:1212px;top:731.5px;width:1px;height:270.5px;background:rgba(40,40,80,0.09);"></div>
<div class="a" style="left:1231px;top:731.5px;width:1px;height:270.5px;background:rgba(40,40,80,0.09);"></div>
<div class="a" style="left:1250px;top:731.5px;width:1px;height:270.5px;background:rgba(40,40,80,0.09);"></div>
<div class="a" style="left:1269px;top:731.5px;width:1px;height:270.5px;background:rgba(40,40,80,0.09);"></div>
<div class="a" style="left:1288px;top:731.5px;width:1px;height:270.5px;background:rgba(40,40,80,0.09);"></div>
<div class="a" style="left:1306px;top:731.5px;width:1px;height:270.5px;background:rgba(40,40,80,0.09);"></div>
<div class="a" style="left:1325px;top:731.5px;width:1px;height:270.5px;background:rgba(40,40,80,0.09);"></div>
<div class="a" style="left:1344px;top:731.5px;width:1px;height:270.5px;background:rgba(40,40,80,0.09);"></div>
<div class="a" style="left:1362px;top:731.5px;width:1px;height:270.5px;background:rgba(40,40,80,0.09);"></div>
<div class="a" style="left:1381px;top:731.5px;width:1px;height:270.5px;background:rgba(40,40,80,0.09);"></div>
<div class="a" style="left:1400px;top:731.5px;width:1px;height:270.5px;background:rgba(40,40,80,0.09);"></div>
<div class="a" style="left:1419px;top:731.5px;width:1px;height:270.5px;background:rgba(40,40,80,0.09);"></div>
<div class="a" style="left:1438px;top:731.5px;width:1px;height:270.5px;background:rgba(40,40,80,0.09);"></div>
<div class="a" style="left:1456px;top:731.5px;width:1px;height:270.5px;background:rgba(40,40,80,0.09);"></div>
<div class="a" style="left:1475px;top:731.5px;width:1px;height:270.5px;background:rgba(40,40,80,0.09);"></div>
<div class="a" style="left:1494px;top:731.5px;width:1px;height:270.5px;background:rgba(40,40,80,0.09);"></div>
<div class="a" style="left:1512px;top:731.5px;width:1px;height:270.5px;background:rgba(40,40,80,0.09);"></div>
<div class="a" style="left:1531px;top:731.5px;width:1px;height:270.5px;background:rgba(40,40,80,0.09);"></div>
<div class="a" style="left:1550px;top:731.5px;width:1px;height:270.5px;background:rgba(40,40,80,0.09);"></div>
<div class="a" style="left:1569px;top:731.5px;width:1px;height:270.5px;background:rgba(40,40,80,0.09);"></div>
<div class="a" style="left:1588px;top:731.5px;width:1px;height:270.5px;background:rgba(40,40,80,0.09);"></div>
<div class="a" style="left:1606px;top:731.5px;width:1px;height:270.5px;background:rgba(40,40,80,0.09);"></div>
<div class="a" style="left:1625px;top:731.5px;width:1px;height:270.5px;background:rgba(40,40,80,0.09);"></div>
<div class="a" style="left:1644px;top:731.5px;width:1px;height:270.5px;background:rgba(40,40,80,0.09);"></div>
<div class="a" style="left:1662px;top:731.5px;width:1px;height:270.5px;background:rgba(40,40,80,0.09);"></div>
<div class="a" style="left:1681px;top:731.5px;width:1px;height:270.5px;background:rgba(40,40,80,0.09);"></div>
<div class="a" style="left:1700px;top:731.5px;width:1px;height:270.5px;background:rgba(40,40,80,0.09);"></div>
<div class="a" style="left:1719px;top:731.5px;width:1px;height:270.5px;background:rgba(40,40,80,0.09);"></div>
<div class="a" style="left:1738px;top:731.5px;width:1px;height:270.5px;background:rgba(40,40,80,0.09);"></div>
<div class="a" style="left:1756px;top:731.5px;width:1px;height:270.5px;background:rgba(40,40,80,0.09);"></div>
<div class="a" style="left:1775px;top:731.5px;width:1px;height:270.5px;background:rgba(40,40,80,0.09);"></div>
<div class="a" style="left:1794px;top:731.5px;width:1px;height:270.5px;background:rgba(40,40,80,0.09);"></div>
<div class="a" style="left:1812px;top:731.5px;width:1px;height:270.5px;background:rgba(40,40,80,0.09);"></div>
<div class="a" style="left:1831px;top:731.5px;width:1px;height:270.5px;background:rgba(40,40,80,0.09);"></div>
<div class="a" style="left:1850px;top:731.5px;width:1px;height:270.5px;background:rgba(40,40,80,0.09);"></div>
<div class="a" style="left:1869px;top:731.5px;width:1px;height:270.5px;background:rgba(40,40,80,0.09);"></div>
<div class="a" style="left:1888px;top:731.5px;width:1px;height:270.5px;background:rgba(40,40,80,0.09);"></div>
<div class="a" style="left:596px;top:839px;width:166px;height:101px;border-radius:6px;background:rgba(191,191,235,0.86)"></div>
<div class="a" style="left:596px;top:945px;width:166px;height:101px;border-radius:6px;background:rgba(191,191,235,0.86)"></div>
<div class="t " style="left:999.5px;top:741.51px;font-size:16.4px;line-height:16.4px;font-weight:700;color:#1e1e2a;">Karfreitag</div>
<div class="t " style="left:1205.5px;top:741.51px;font-size:16.4px;line-height:16.4px;font-weight:700;color:#1e1e2a;">Ostermontag</div>
<div class="t " style="left:999.5px;top:900.51px;font-size:16.4px;line-height:16.4px;font-weight:700;color:#1e1e2a;">Karfreitag</div>
<div class="t " style="left:1205.5px;top:900.51px;font-size:16.4px;line-height:16.4px;font-weight:700;color:#1e1e2a;">Ostermontag</div>
<svg class="a" style="left:391px;top:740px;" width="16" height="15" viewBox="0 0 16 15"><rect x="1" y="1" width="14" height="13" rx="2.5" fill="none" stroke="#6a6898" stroke-width="1.6"/><path d="M1 4.5 H15" stroke="#6a6898" stroke-width="1.4"/><path d="M3.5 9.5 H12.5 M5.5 7.5 L3.5 9.5 L5.5 11.5 M10.5 7.5 L12.5 9.5 L10.5 11.5" fill="none" stroke="#6a6898" stroke-width="1.3"/></svg>
<div class="t " style="left:418.8px;top:741.51px;font-size:13.92px;line-height:13.92px;font-weight:700;color:#2a2a38;">Blockreservier...</div>
<svg class="a" style="left:543px;top:742px;" width="19" height="11" viewBox="0 0 19 11"><path d="M1 1.5 L9.5 9.5 L18 1.5" fill="none" stroke="#6a6898" stroke-width="1.5"/></svg>
<svg class="a" style="left:391px;top:870px;" width="40" height="40" viewBox="0 0 40 40"><defs><clipPath id="c1"><circle cx="20" cy="20" r="19.8"/></clipPath>
<radialGradient id="rf" cx="0.5" cy="0.45" r="0.6"><stop offset="0" stop-color="#e2b49a"/><stop offset="0.7" stop-color="#c99276"/><stop offset="1" stop-color="#a87058"/></radialGradient>
<linearGradient id="rbg" x1="0" y1="0" x2="1" y2="0"><stop offset="0" stop-color="#8e8a84"/><stop offset="0.5" stop-color="#c8c4bc"/><stop offset="1" stop-color="#9a968e"/></linearGradient></defs>
<g clip-path="url(#c1)"><rect width="40" height="40" fill="url(#rbg)"/>
<path d="M2 40 Q6 33 20 34 Q34 33 38 40Z" fill="#2a2a30"/>
<ellipse cx="8.5" cy="21" rx="2.5" ry="4" fill="#c08870"/><ellipse cx="31.5" cy="21" rx="2.5" ry="4" fill="#c08870"/>
<path d="M9 18 Q9 7 20 7 Q31 7 31 18 L30.5 27 Q28 37 20 38 Q12 37 9.5 27Z" fill="url(#rf)"/>
<path d="M7.5 21 Q6 4 20 2.5 Q34 3 32.5 21 Q31 11 27 10.5 Q20 12 12 10.5 Q9 12 7.5 21Z" fill="#4a3222"/>
<path d="M13 19.5 Q15 18.5 17 19.5 M23 19.5 Q25 18.5 27 19.5" stroke="#5a3a2a" stroke-width="1" fill="none"/>
<path d="M14 21.5 H16.5 M23.5 21.5 H26" stroke="#3a2a22" stroke-width="1.2"/>
<path d="M20 22 L19 27 H21" stroke="#a87060" stroke-width="0.8" fill="none"/>
<path d="M16.5 30.5 Q20 31.5 23.5 30.5" stroke="#9a5a4a" stroke-width="1.1" fill="none"/></g></svg>
<div class="t " style="left:441.9px;top:873.47px;font-size:14.8px;line-height:14.8px;font-weight:400;color:#2a2a38;">Robert</div>
<div class="t " style="left:441.9px;top:893.44px;font-size:14.6px;line-height:14.6px;font-weight:700;color:#2a2a38;">Maier</div>
<svg class="a" style="left:391px;top:976px;" width="40" height="26" viewBox="0 0 40 26"><defs><clipPath id="c2"><circle cx="20" cy="20" r="19.8"/></clipPath>
<radialGradient id="df" cx="0.5" cy="0.5" r="0.6"><stop offset="0" stop-color="#f0cdb8"/><stop offset="1" stop-color="#d8a088"/></radialGradient></defs>
<g clip-path="url(#c2)"><rect width="40" height="40" fill="#b88a60"/>
<path d="M3 40 Q1 6 20 3 Q39 6 37 40Z" fill="#d0a870"/>
<path d="M10 26 Q10 13 20 13 Q30 13 30 26 V40 H10Z" fill="url(#df)"/>
<path d="M8 28 Q8 9 20 8 Q32 9 32 28 Q30 14 22 12 Q14 14 8 28Z" fill="#e0bc88"/>
<path d="M14 21.5 H17 M23 21.5 H26" stroke="#6a4a3a" stroke-width="1.1"/></g></svg>
<div class="t " style="left:441.9px;top:979.61px;font-size:14.4px;line-height:14.4px;font-weight:400;color:#2a2a38;">Denise</div>
<div class="a" style="left:601px;top:843px;width:8px;height:15.5px;border-radius:4px;background:#e35545"></div>
<div class="a" style="left:601px;top:864px;width:8px;height:15.5px;border-radius:4px;background:#f6b80a"></div>
<div class="a" style="left:601px;top:886px;width:8px;height:15.5px;border-radius:4px;background:#fff"></div>
<div class="a" style="left:601px;top:907px;width:8px;height:15.5px;border-radius:4px;background:#fff"></div>
<div class="t " style="left:614px;top:846.39px;font-size:14.3px;line-height:14.3px;font-weight:400;color:#1e1e2a;">Bander, Finkeng...</div>
<div class="t " style="left:614px;top:866.79px;font-size:14.3px;line-height:14.3px;font-weight:700;color:#1e1e2a;">Bander, 91599 ...</div>
<div class="t " style="left:614px;top:886.64px;font-size:14.6px;line-height:14.6px;font-weight:400;color:#1e1e2a;">AU260502, 08:0...</div>
<div class="t " style="left:614px;top:906.98px;font-size:14.2px;line-height:14.2px;font-weight:400;color:#1e1e2a;">Finkengasse 25b</div>
<div class="a" style="left:742px;top:848px;width:10px;height:10px;border-radius:50%;background:#f59a4a"></div>
<svg class="a" style="left:738px;top:868px;" width="20" height="5" viewBox="0 0 20 5"><path d="M0.5 0.5 H4 L5 1.5 V3.5 L4 4.5 H0.5Z M7 0.5 H11 L12 1.3 V1.8 L11.3 2.5 L12 3.2 V3.7 L11 4.5 H7Z M7 2.5 H11.3 M19.5 0.5 H14.5 L14 1 V2 L14.5 2.5 H19 L19.5 3 V4 L19 4.5 H14" fill="none" stroke="#5a5a78" stroke-width="0.9"/></svg>
<svg class="a" style="left:740px;top:880px;" width="15" height="12" viewBox="0 0 15 12"><path d="M1 1 L7.5 6 L14 1 M1 5.5 L7.5 10.5 L14 5.5" fill="none" stroke="#f4f4ff" stroke-width="1.3"/></svg>
<div class="a" style="left:601px;top:949px;width:8px;height:15.5px;border-radius:4px;background:#e35545"></div>
<div class="a" style="left:601px;top:970px;width:8px;height:15.5px;border-radius:4px;background:#f6b80a"></div>
<div class="a" style="left:601px;top:992px;width:8px;height:15.5px;border-radius:4px;background:#fff"></div>
<div class="a" style="left:601px;top:1013px;width:8px;height:15.5px;border-radius:4px;background:#fff"></div>
<div class="t " style="left:614px;top:952.39px;font-size:14.3px;line-height:14.3px;font-weight:400;color:#1e1e2a;">Bander, Finkeng...</div>
<div class="t " style="left:614px;top:972.79px;font-size:14.3px;line-height:14.3px;font-weight:700;color:#1e1e2a;">Bander, 91599 ...</div>
<div class="t " style="left:614px;top:992.64px;font-size:14.6px;line-height:14.6px;font-weight:400;color:#1e1e2a;">AU260502, 08:0...</div>
<div class="t " style="left:614px;top:1012.98px;font-size:14.2px;line-height:14.2px;font-weight:400;color:#1e1e2a;">Finkengasse 25b</div>
<div class="a" style="left:742px;top:954px;width:10px;height:10px;border-radius:50%;background:#f59a4a"></div>
<svg class="a" style="left:738px;top:974px;" width="20" height="5" viewBox="0 0 20 5"><path d="M0.5 0.5 H4 L5 1.5 V3.5 L4 4.5 H0.5Z M7 0.5 H11 L12 1.3 V1.8 L11.3 2.5 L12 3.2 V3.7 L11 4.5 H7Z M7 2.5 H11.3 M19.5 0.5 H14.5 L14 1 V2 L14.5 2.5 H19 L19.5 3 V4 L19 4.5 H14" fill="none" stroke="#5a5a78" stroke-width="0.9"/></svg>
<svg class="a" style="left:740px;top:986px;" width="15" height="12" viewBox="0 0 15 12"><path d="M1 1 L7.5 6 L14 1 M1 5.5 L7.5 10.5 L14 5.5" fill="none" stroke="#f4f4ff" stroke-width="1.3"/></svg>
<div class="a" style="left:601px;top:928px;width:156px;height:6px;border-radius:3px;background:#e6bf8e"></div>
<div class="a" style="left:601px;top:928px;width:78px;height:6px;border-radius:3px 0 0 3px;background:#e8000c"></div>
<div class="t " style="left:810.3px;top:848.02px;font-size:16.98px;line-height:16.98px;font-weight:400;color:#fff;">Bachmayer, AU260501, Mozartstraße 125a / Teil 1 (Termin über Feiertage), Bachma...</div>
<div class="a" style="left:1466px;top:842.5px;width:20px;height:21px;border-radius:2px;background:#4cc47a"></div>
<svg class="a" style="left:1470px;top:846px;" width="12" height="14" viewBox="0 0 12 14"><rect x="1.5" y="5.3" width="9.5" height="8" rx="1.5" fill="none" stroke="#2a3a5a" stroke-width="1.2"/><path d="M3.8 5.3 V3.2 Q3.8 1 6.2 1 Q8.6 1 8.6 3.2 V5.3" fill="none" stroke="#2a3a5a" stroke-width="1.2"/><circle cx="6.2" cy="9.2" r="0.8" fill="#2a3a5a"/></svg>
<svg class="a" style="left:1466px;top:868px;" width="20" height="5" viewBox="0 0 20 5"><path d="M0.5 0.5 H4 L5 1.5 V3.5 L4 4.5 H0.5Z M7 0.5 H11 L12 1.3 V1.8 L11.3 2.5 L12 3.2 V3.7 L11 4.5 H7Z M7 2.5 H11.3 M19.5 0.5 H14.5 L14 1 V2 L14.5 2.5 H19 L19.5 3 V4 L19 4.5 H14" fill="none" stroke="#2a2a50" stroke-width="0.9"/></svg>
<svg class="a" style="left:1469.5px;top:879.5px;" width="14" height="8" viewBox="0 0 14 8"><path d="M0.5 0.5 L7 6 L13.5 0.5 M0.5 4 L7 9.5 L13.5 4" fill="none" stroke="#f0f0ff" stroke-width="1.1"/></svg>
<div class="t " style="left:810.3px;top:954.02px;font-size:16.98px;line-height:16.98px;font-weight:400;color:#fff;">Bachmayer, AU260501, Mozartstraße 125a / Teil 1 (Termin über Feiertage), Bachma...</div>
<div class="a" style="left:1466px;top:948.5px;width:20px;height:21px;border-radius:2px;background:#4cc47a"></div>
<svg class="a" style="left:1470px;top:952px;" width="12" height="14" viewBox="0 0 12 14"><rect x="1.5" y="5.3" width="9.5" height="8" rx="1.5" fill="none" stroke="#2a3a5a" stroke-width="1.2"/><path d="M3.8 5.3 V3.2 Q3.8 1 6.2 1 Q8.6 1 8.6 3.2 V5.3" fill="none" stroke="#2a3a5a" stroke-width="1.2"/><circle cx="6.2" cy="9.2" r="0.8" fill="#2a3a5a"/></svg>
<svg class="a" style="left:1466px;top:974px;" width="20" height="5" viewBox="0 0 20 5"><path d="M0.5 0.5 H4 L5 1.5 V3.5 L4 4.5 H0.5Z M7 0.5 H11 L12 1.3 V1.8 L11.3 2.5 L12 3.2 V3.7 L11 4.5 H7Z M7 2.5 H11.3 M19.5 0.5 H14.5 L14 1 V2 L14.5 2.5 H19 L19.5 3 V4 L19 4.5 H14" fill="none" stroke="#2a2a50" stroke-width="0.9"/></svg>
<svg class="a" style="left:1469.5px;top:985.5px;" width="14" height="8" viewBox="0 0 14 8"><path d="M0.5 0.5 L7 6 L13.5 0.5 M0.5 4 L7 9.5 L13.5 4" fill="none" stroke="#f0f0ff" stroke-width="1.1"/></svg>
<div class="a" style="left:375px;top:1001.5px;width:1543px;height:17.5px;background:#fbfbfb;"></div>
<div class="a" style="left:1902px;top:641px;width:16px;height:361px;background:#fbfbfb;"></div>
<svg class="a" style="left:1904px;top:648px;" width="13" height="10" viewBox="0 0 13 10"><path d="M1 9 L6.5 1 L12 9Z" fill="#8a8a8a" stroke="#8a8a8a" stroke-width="1.2" stroke-linejoin="round"/></svg>
<div class="a" style="left:1905.5px;top:665px;width:10.5px;height:181px;border-radius:5px;background:#8a8a8a"></div>
<svg class="a" style="left:1904px;top:986.5px;" width="13" height="10" viewBox="0 0 13 10"><path d="M1 1 L6.5 9 L12 1Z" fill="#8a8a8a" stroke="#8a8a8a" stroke-width="1.2" stroke-linejoin="round"/></svg>
<svg class="a" style="left:1885.5px;top:1004.5px;" width="10" height="13" viewBox="0 0 10 13"><path d="M1 1 L9 6.5 L1 12Z" fill="#8a8a8a" stroke="#8a8a8a" stroke-width="1.2" stroke-linejoin="round"/></svg>
<svg class="a" style="left:382.5px;top:1004.5px;" width="10" height="13" viewBox="0 0 10 13"><path d="M9 1 L1 6.5 L9 12Z" fill="#8a8a8a" stroke="#8a8a8a" stroke-width="1.2" stroke-linejoin="round"/></svg>
<div class="a" style="left:399.5px;top:1005px;width:475px;height:10.5px;border-radius:5px;background:#8a8a8a"></div>
</body></html>
